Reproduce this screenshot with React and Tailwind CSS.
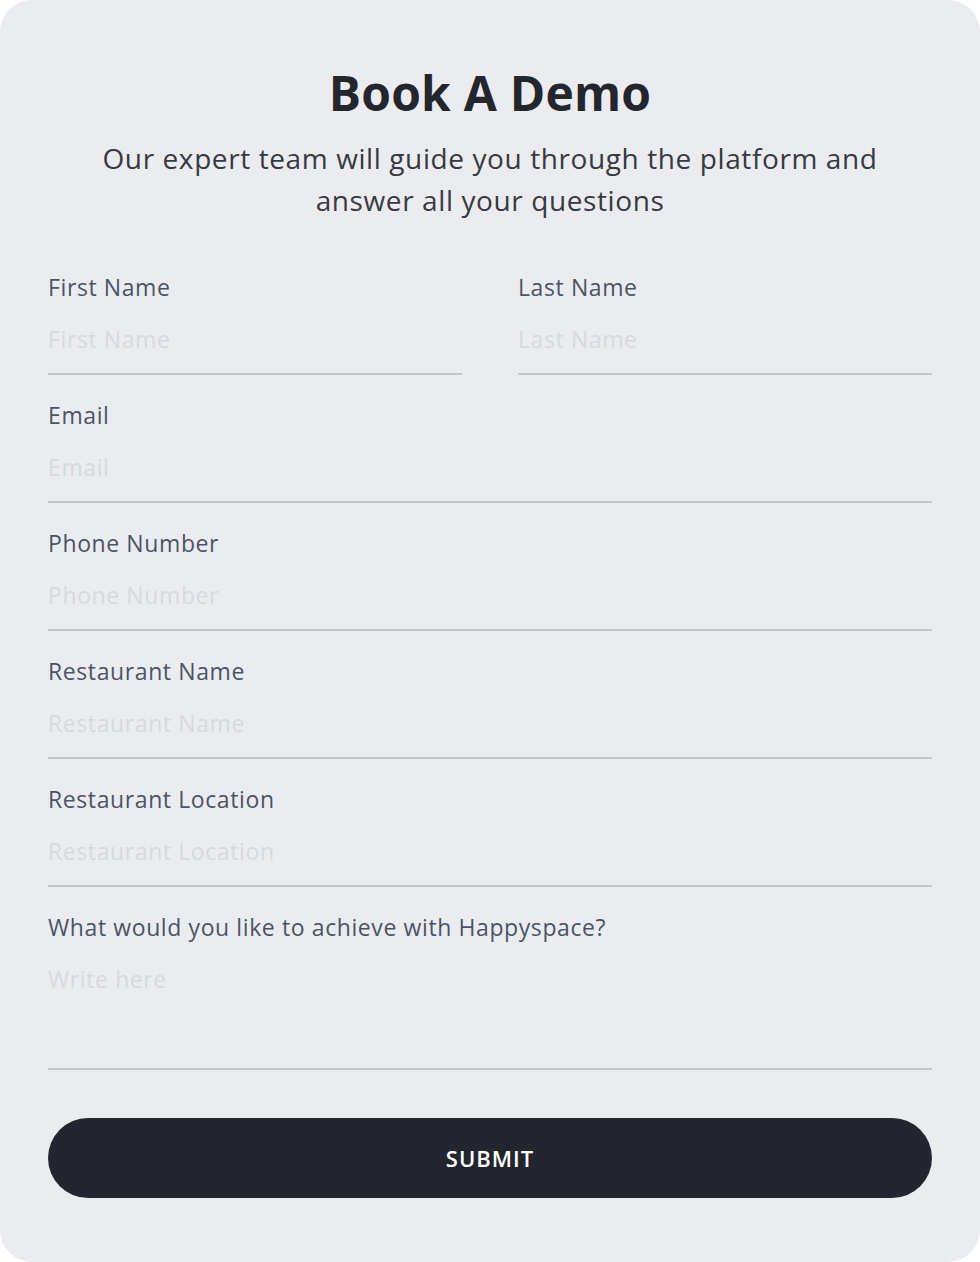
import React from 'react';

const font = { fontFamily: '"Open Sans", "Noto Sans", sans-serif' };

const Field = ({ label, placeholder, textarea }) => (
  <div className="flex flex-col mb-[23px]">
    <label className="text-[23px] leading-[34px] tracking-[0.6px] text-[#4b5467]">{label}</label>
    {textarea ? (
      <textarea
        placeholder={placeholder}
        className="mt-2 h-[118px] pt-[10px] bg-transparent text-[23px] leading-[34px] tracking-[0.6px] text-[#23262d] placeholder:text-[#d7d9df] border-b-2 border-[#c3c6cd] outline-none resize-none"
      />
    ) : (
      <input
        type="text"
        placeholder={placeholder}
        className="mt-2 pt-[10px] pb-[17px] bg-transparent text-[23px] leading-[34px] tracking-[0.6px] text-[#23262d] placeholder:text-[#d7d9df] border-b-2 border-[#c3c6cd] outline-none"
      />
    )}
  </div>
);

export default function App() {
  return (
    <div className="bg-white min-h-screen" style={font}>
      <div className="bg-[#ebecf0] rounded-[32px] w-[980px] h-[1262px] px-12 pt-[64px]">
        <h1 className="text-center text-[48px] leading-[58px] font-bold text-[#23262d] tracking-[0.2px]">
          Book A Demo
        </h1>
        <p className="mt-[15px] mx-auto max-w-[820px] text-center text-[28px] leading-[42px] tracking-[0.6px] text-[#383a41]">
          Our expert team will guide you through the platform and answer all your questions
        </p>

        <form className="mt-[49px]" onSubmit={e => e.preventDefault()}>
          <div className="grid grid-cols-2 gap-x-14">
            <Field label="First Name" placeholder="First Name" />
            <Field label="Last Name" placeholder="Last Name" />
          </div>
          <Field label="Email" placeholder="Email" />
          <Field label="Phone Number" placeholder="Phone Number" />
          <Field label="Restaurant Name" placeholder="Restaurant Name" />
          <Field label="Restaurant Location" placeholder="Restaurant Location" />
          <Field label="What would you like to achieve with Happyspace?" placeholder="Write here" textarea />

          <button
            type="submit"
            className="mt-[25px] w-full h-[80px] rounded-full bg-[#23262e] text-white text-[22px] font-semibold tracking-[1px]"
          >
            SUBMIT
          </button>
        </form>
      </div>
    </div>
  );
}
